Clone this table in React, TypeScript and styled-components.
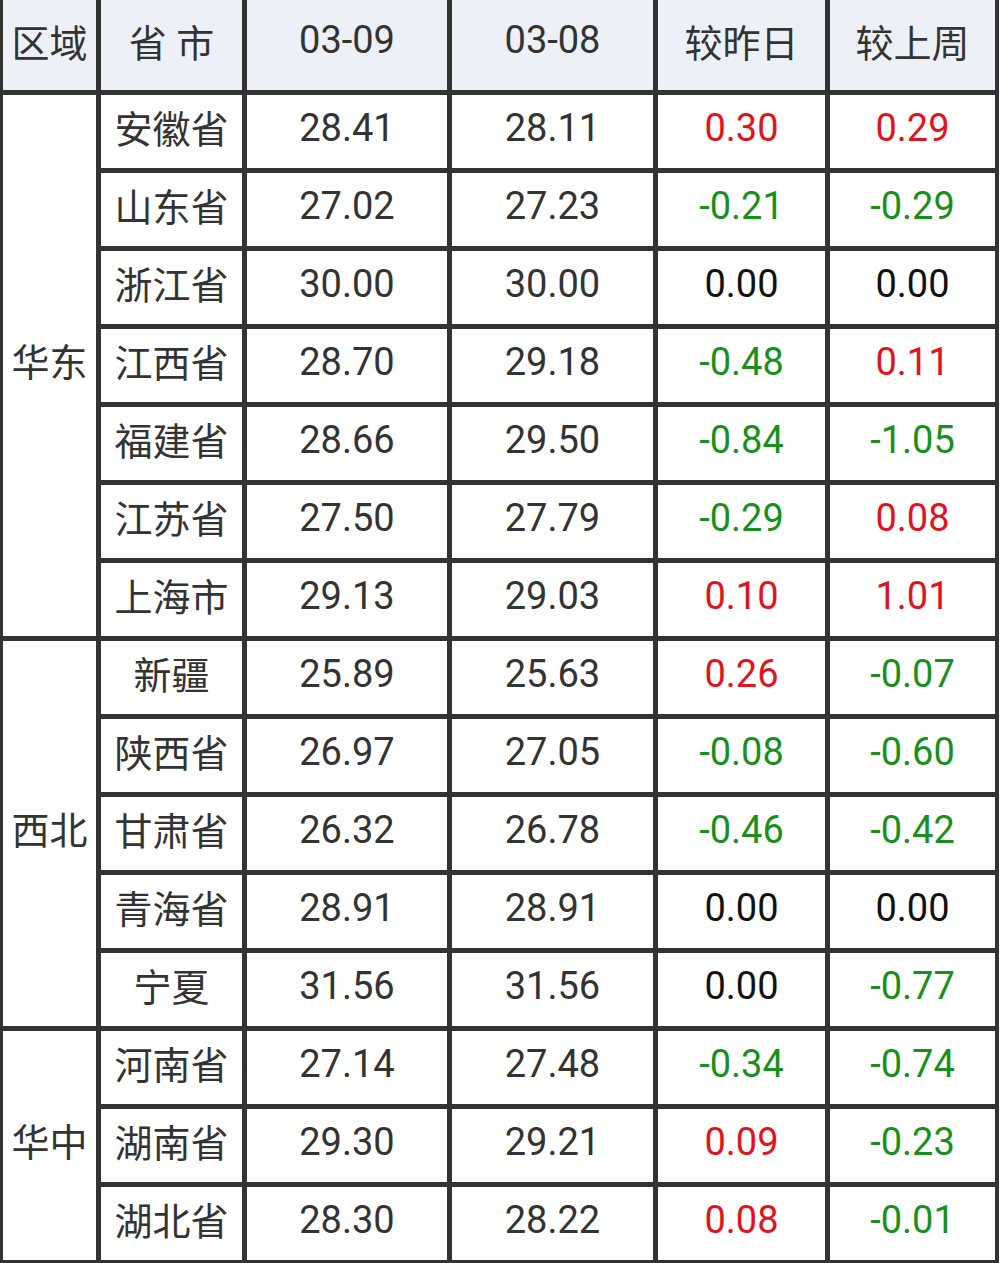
import * as React from 'react';
import styled, { createGlobalStyle } from 'styled-components';

const GlobalStyle = createGlobalStyle`
    html, body {
        margin: 0;
        padding: 0;
        background: #ffffff;
    }
    body {
        font-family: Roboto, "Noto Sans CJK SC", sans-serif;
    }
`;

const Colors = {
    Border: '#333333',
    HeadBg: '#edf1f7',
    Text: '#333333',
    Red: '#e0141e',
    Green: '#19901c',
    Black: '#111111',
};

const Sheet = styled.div`
    display: grid;
    grid-template-columns: 93px 141px 200px 201px 167px 165px;
    grid-auto-rows: 73px;
    grid-template-rows: 90px;
    gap: 5px;
    width: 999px;
    box-sizing: border-box;
    padding: 0 4px 5px 3px;
    background-color: ${Colors.Border};
`;

const HeadCell = styled.div`
    display: flex;
    align-items: center;
    justify-content: center;
    padding-bottom: 10px;
    box-sizing: border-box;
    background-color: ${Colors.HeadBg};
    color: ${Colors.Text};
    font-size: 38px;
    white-space: pre;
`;

interface RegionProps {
    span: number;
}

const RegionCell = styled.div<RegionProps>`
    grid-column: 1;
    grid-row: span ${(props) => props.span};
    display: flex;
    align-items: center;
    justify-content: center;
    padding-bottom: 12px;
    box-sizing: border-box;
    background-color: #ffffff;
    color: ${Colors.Text};
    font-size: 38px;
`;

type Tone = 'up' | 'down' | 'flat' | 'plain';

interface CellProps {
    tone?: Tone;
}

const toneColor = (tone?: Tone) => {
    if (tone === 'up') return Colors.Red;
    if (tone === 'down') return Colors.Green;
    if (tone === 'flat') return Colors.Black;
    return Colors.Text;
};

const Cell = styled.div<CellProps>`
    display: flex;
    align-items: center;
    justify-content: center;
    padding-bottom: ${(props) => (props.tone ? '8px' : '10px')};
    box-sizing: border-box;
    background-color: #ffffff;
    color: ${(props) => toneColor(props.tone)};
    font-size: 38px;
`;

interface Row {
    name: string;
    today: string;
    yesterday: string;
    day: string;
    week: string;
}

interface Region {
    name: string;
    rows: Array<Row>;
}

const regions: Array<Region> = [
    {
        name: '华东',
        rows: [
            { name: '安徽省', today: '28.41', yesterday: '28.11', day: '0.30', week: '0.29' },
            { name: '山东省', today: '27.02', yesterday: '27.23', day: '-0.21', week: '-0.29' },
            { name: '浙江省', today: '30.00', yesterday: '30.00', day: '0.00', week: '0.00' },
            { name: '江西省', today: '28.70', yesterday: '29.18', day: '-0.48', week: '0.11' },
            { name: '福建省', today: '28.66', yesterday: '29.50', day: '-0.84', week: '-1.05' },
            { name: '江苏省', today: '27.50', yesterday: '27.79', day: '-0.29', week: '0.08' },
            { name: '上海市', today: '29.13', yesterday: '29.03', day: '0.10', week: '1.01' },
        ],
    },
    {
        name: '西北',
        rows: [
            { name: '新疆', today: '25.89', yesterday: '25.63', day: '0.26', week: '-0.07' },
            { name: '陕西省', today: '26.97', yesterday: '27.05', day: '-0.08', week: '-0.60' },
            { name: '甘肃省', today: '26.32', yesterday: '26.78', day: '-0.46', week: '-0.42' },
            { name: '青海省', today: '28.91', yesterday: '28.91', day: '0.00', week: '0.00' },
            { name: '宁夏', today: '31.56', yesterday: '31.56', day: '0.00', week: '-0.77' },
        ],
    },
    {
        name: '华中',
        rows: [
            { name: '河南省', today: '27.14', yesterday: '27.48', day: '-0.34', week: '-0.74' },
            { name: '湖南省', today: '29.30', yesterday: '29.21', day: '0.09', week: '-0.23' },
            { name: '湖北省', today: '28.30', yesterday: '28.22', day: '0.08', week: '-0.01' },
        ],
    },
];

// Rising prices are red, falling green, unchanged black
const toneOf = (value: string): Tone => {
    const n = parseFloat(value);
    if (n > 0) return 'up';
    if (n < 0) return 'down';
    return 'flat';
};

const headers = ['区域', '省 市', '03-09', '03-08', '较昨日', '较上周'];

export default function App() {
    return (
        <>
            <GlobalStyle />
            <Sheet>
                {headers.map((h) => (
                    <HeadCell key={h}>{h}</HeadCell>
                ))}
                {regions.map((region) => (
                    <React.Fragment key={region.name}>
                        <RegionCell span={region.rows.length}>{region.name}</RegionCell>
                        {region.rows.map((row) => (
                            <React.Fragment key={row.name}>
                                <Cell>{row.name}</Cell>
                                <Cell tone="plain">{row.today}</Cell>
                                <Cell tone="plain">{row.yesterday}</Cell>
                                <Cell tone={toneOf(row.day)}>{row.day}</Cell>
                                <Cell tone={toneOf(row.week)}>{row.week}</Cell>
                            </React.Fragment>
                        ))}
                    </React.Fragment>
                ))}
            </Sheet>
        </>
    );
}
